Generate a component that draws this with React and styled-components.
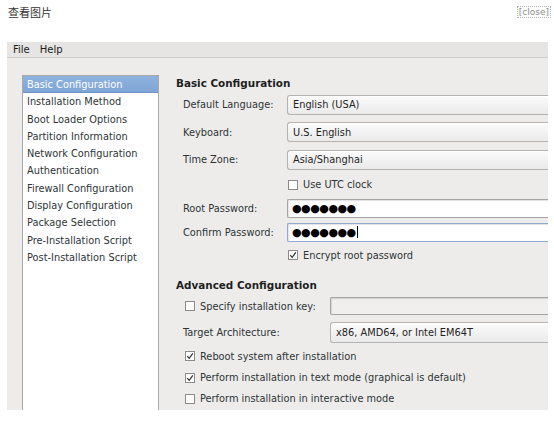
import React from "react";
import styled, { createGlobalStyle } from "styled-components";

const Global = createGlobalStyle`
  html, body { margin: 0; padding: 0; background: #fff; }
  body { font-family: "DejaVu Sans", "Noto Sans CJK SC", sans-serif; }
`;

const Page = styled.div`
  width: 554px;
  height: 427px;
  overflow: hidden;
`;

const Header = styled.div`
  display: flex;
  justify-content: space-between;
  align-items: center;
  height: 24px;
  padding: 0 3px 0 8px;
`;

const Title = styled.div`
  font-family: "Noto Sans CJK SC", sans-serif;
  font-size: 11px;
  color: #333;
`;

const Close = styled.span`
  font-family: "DejaVu Sans", sans-serif;
  font-size: 9px;
  color: #8a8a8a;
  border: 1px dotted #b0b0b0;
  padding: 0 1px;
  line-height: 10px;
`;

const Shot = styled.div`
  margin: 18px 0 0 7px;
  width: 541px;
  height: 368px;
  background: #edeceb;
  overflow: hidden;
  display: flex;
  flex-direction: column;
  font-family: "DejaVu Sans", sans-serif;
  font-size: 9.8px;
  color: #2e3436;
`;

const MenuBar = styled.div`
  height: 15px;
  display: flex;
  align-items: center;
  gap: 10px;
  padding-left: 6px;
  background: #e6e5e3;
  border-bottom: 1px solid #cfcecc;
  color: #1a1a1a;
  font-size: 10px;
  flex-shrink: 0;
`;

const Body = styled.div`
  flex: 1;
  display: flex;
  min-height: 0;
`;

const List = styled.div`
  margin: 17px 0 0 15px;
  width: 135px;
  flex-shrink: 0;
  background: #fff;
  border: 1px solid #a9a9a7;
  border-bottom: none;
`;

const ListItem = styled.div`
  height: 17.3px;
  line-height: 17px;
  padding-left: 4px;
  white-space: nowrap;
  box-sizing: border-box;
  color: ${(p) => (p.$active ? "#fff" : "#2e3436")};
  background: ${(p) => (p.$active ? "linear-gradient(#8fb2de, #7fa5d6)" : "transparent")};
  border-bottom: ${(p) => (p.$active ? "1px solid #6f95c8" : "none")};
`;

const Content = styled.div`
  flex: 1;
  display: flex;
  flex-direction: column;
  padding-left: 17px;
  padding-top: 18px;
  min-width: 0;
`;

const Heading = styled.div`
  font-weight: bold;
  font-size: 10.4px;
  color: #1e1e1e;
  height: 15px;
  line-height: 15px;
  margin-top: ${(p) => p.$mt || 0}px;
`;

const Row = styled.div`
  display: flex;
  align-items: center;
  height: ${(p) => p.$h}px;
  padding-left: ${(p) => p.$indent ?? 7}px;
  white-space: nowrap;
`;

const Label = styled.div`
  width: ${(p) => p.$w}px;
  flex-shrink: 0;
`;

const Combo = styled.div`
  flex: 1;
  min-width: 300px;
  height: ${(p) => p.$h || 20}px;
  box-sizing: border-box;
  display: flex;
  align-items: center;
  padding-left: 5px;
  border: 1px solid #b4b3b1;
  border-right: none;
  border-radius: 3px 0 0 3px;
  background: linear-gradient(#fbfbfb, #ebeaea);
  color: #1e1e1e;
  box-shadow: inset 0 1px 0 #fff;
`;

const Entry = styled.div`
  flex: 1;
  min-width: 300px;
  height: ${(p) => p.$h || 19}px;
  box-sizing: border-box;
  display: flex;
  align-items: center;
  padding-left: 4px;
  background: ${(p) => (p.$disabled ? "#f0efee" : "#fff")};
  border: 1px solid ${(p) => (p.$focus ? "#8fa9cf" : "#a5a4a2")};
  border-right: none;
  border-radius: 2px 0 0 2px;
  box-shadow: inset 1px 1px 1px rgba(0, 0, 0, 0.12);
`;

const Dots = styled.span`
  font-size: 11px;
  letter-spacing: -0.5px;
  color: #000;
  line-height: 1;
`;

const Caret = styled.span`
  display: inline-block;
  width: 1px;
  height: 12px;
  background: #000;
  margin-left: 1px;
`;

const CheckLine = styled.div`
  display: flex;
  align-items: center;
  gap: 5px;
`;

const Box = styled.span`
  width: 10px;
  height: 10px;
  box-sizing: border-box;
  border: 1px solid #8c8b89;
  background: #fff;
  display: inline-flex;
  align-items: center;
  justify-content: center;
  flex-shrink: 0;
`;

const Check = ({ checked, children }) => (
  <CheckLine>
    <Box>
      {checked && (
        <svg width="8" height="8" viewBox="0 0 8 8">
          <path d="M1.2 4.2 L3.2 6.3 L6.8 1.4" fill="none" stroke="#2e2e2e" strokeWidth="1.2" />
        </svg>
      )}
    </Box>
    <span>{children}</span>
  </CheckLine>
);

const items = [
  "Basic Configuration",
  "Installation Method",
  "Boot Loader Options",
  "Partition Information",
  "Network Configuration",
  "Authentication",
  "Firewall Configuration",
  "Display Configuration",
  "Package Selection",
  "Pre-Installation Script",
  "Post-Installation Script",
];

export default function App() {
  return (
    <Page>
      <Global />
      <Header>
        <Title>查看图片</Title>
        <Close>[close]</Close>
      </Header>
      <Shot>
        <MenuBar>
          <span>File</span>
          <span>Help</span>
        </MenuBar>
        <Body>
          <List>
            {items.map((t, i) => (
              <ListItem key={t} $active={i === 0}>
                {t}
              </ListItem>
            ))}
          </List>
          <Content>
            <Heading>Basic Configuration</Heading>
            <Row $h={27}>
              <Label $w={104}>Default Language:</Label>
              <Combo>English (USA)</Combo>
            </Row>
            <Row $h={28}>
              <Label $w={104}>Keyboard:</Label>
              <Combo>U.S. English</Combo>
            </Row>
            <Row $h={27}>
              <Label $w={104}>Time Zone:</Label>
              <Combo>Asia/Shanghai</Combo>
            </Row>
            <Row $h={23} $indent={112}>
              <Check>Use UTC clock</Check>
            </Row>
            <Row $h={24}>
              <Label $w={104}>Root Password:</Label>
              <Entry>
                <Dots>●●●●●●●</Dots>
              </Entry>
            </Row>
            <Row $h={24}>
              <Label $w={104}>Confirm Password:</Label>
              <Entry $focus>
                <Dots>●●●●●●●</Dots>
                <Caret />
              </Entry>
            </Row>
            <Row $h={22} $indent={112}>
              <Check checked>Encrypt root password</Check>
            </Row>
            <Heading $mt={12}>Advanced Configuration</Heading>
            <Row $h={26} $indent={9}>
              <Label $w={145}>
                <Check>Specify installation key:</Check>
              </Label>
              <Entry $h={18} $disabled />
            </Row>
            <Row $h={26}>
              <Label $w={147}>Target Architecture:</Label>
              <Combo $h={21}>x86, AMD64, or Intel EM64T</Combo>
            </Row>
            <Row $h={22} $indent={9}>
              <Check checked>Reboot system after installation</Check>
            </Row>
            <Row $h={21} $indent={9}>
              <Check checked>Perform installation in text mode (graphical is default)</Check>
            </Row>
            <Row $h={21} $indent={9}>
              <Check>Perform installation in interactive mode</Check>
            </Row>
          </Content>
        </Body>
      </Shot>
    </Page>
  );
}
